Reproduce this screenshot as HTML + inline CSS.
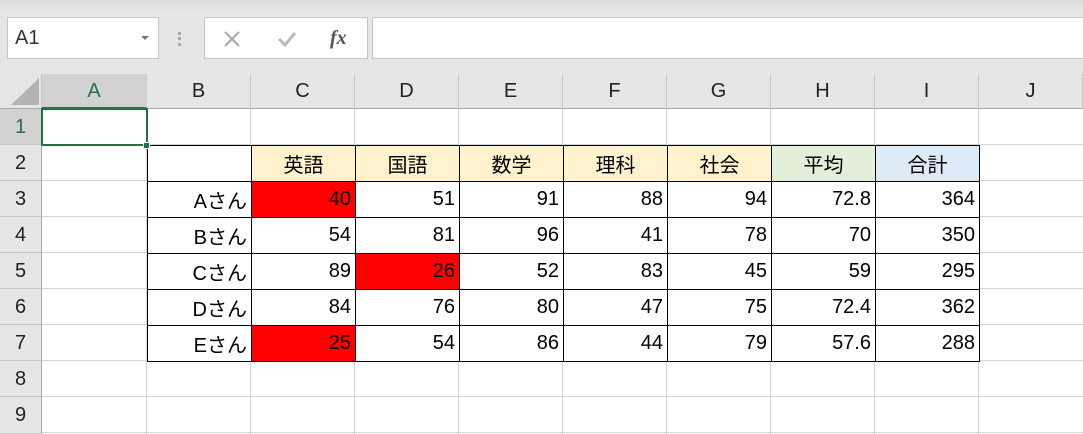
<!DOCTYPE html><html><head><meta charset="utf-8"><style>
*{margin:0;padding:0;box-sizing:border-box}
body{width:1083px;height:434px;overflow:hidden;background:#fff;font-family:"Liberation Sans","Noto Sans CJK JP",sans-serif;position:relative}
.a{position:absolute}
.tb{left:0;top:0;width:1083px;height:74px;background:linear-gradient(#dcdcdc,#e6e6e6 12px,#e6e6e6)}
.box{background:#fff;border:1px solid #c6c6c6}
.ch{top:74px;height:35px;background:#e6e6e6;border-right:1px solid #c8c8c8;border-bottom:1px solid #a8a8a8;font-size:20px;color:#222;text-align:center;line-height:35px}
.rh{left:0;width:42px;background:#e6e6e6;border-bottom:1px solid #c8c8c8;border-right:1px solid #a8a8a8;font-size:20px;color:#222;text-align:center;line-height:36px}
</style></head><body>
<div class="a tb"></div>
<div class="a box" style="left:7px;top:17px;width:152px;height:42px;font-size:20px;line-height:40px;padding-left:7px;color:#333">A1<span class="a" style="right:9px;top:18px;border:4px solid transparent;border-top:4px solid #777"></span></div>
<div class="a" style="left:178px;top:32px;width:3px;height:14px;border-left:3px dotted #aaa"></div>
<div class="a box" style="left:204px;top:17px;width:164px;height:42px"></div>
<svg class="a" style="left:222px;top:29px" width="20" height="20"><path d="M3 3L17 17M17 3L3 17" stroke="#aaa" stroke-width="2"/></svg>
<svg class="a" style="left:276px;top:29px" width="22" height="20"><path d="M3 10L9 16L19 4" stroke="#bbb" stroke-width="3" fill="none"/></svg>
<div class="a" style="left:330px;top:27px;font-family:'Liberation Serif',serif;font-style:italic;font-weight:bold;font-size:20px;color:#555">fx</div>
<div class="a box" style="left:372px;top:17px;width:720px;height:42px"></div>
<div class="a" style="left:0;top:74px;width:42px;height:35px;background:#e6e6e6;border-right:1px solid #c8c8c8;border-bottom:1px solid #a8a8a8"></div>
<svg class="a" style="left:10px;top:78px" width="30" height="28"><path d="M29 0L29 27L1 27Z" fill="#b4b4b4"/></svg>
<div class="a ch" style="left:42px;width:105px;background:#d2d2d2;color:#217346;border-bottom:2px solid #217346">A</div>
<div class="a ch" style="left:147px;width:104px">B</div>
<div class="a ch" style="left:251px;width:104px">C</div>
<div class="a ch" style="left:355px;width:104px">D</div>
<div class="a ch" style="left:459px;width:104px">E</div>
<div class="a ch" style="left:563px;width:104px">F</div>
<div class="a ch" style="left:667px;width:104px">G</div>
<div class="a ch" style="left:771px;width:104px">H</div>
<div class="a ch" style="left:875px;width:104px">I</div>
<div class="a ch" style="left:979px;width:104px">J</div>
<div class="a rh" style="top:109px;height:36px;background:#d2d2d2;color:#217346">1</div>
<div class="a rh" style="top:145px;height:36px">2</div>
<div class="a rh" style="top:181px;height:36px">3</div>
<div class="a rh" style="top:217px;height:36px">4</div>
<div class="a rh" style="top:253px;height:36px">5</div>
<div class="a rh" style="top:289px;height:36px">6</div>
<div class="a rh" style="top:325px;height:36px">7</div>
<div class="a rh" style="top:361px;height:36px">8</div>
<div class="a rh" style="top:397px;height:37px">9</div>
<div class="a" style="left:42px;top:109px;width:1041px;height:325px;background:
repeating-linear-gradient(to bottom,transparent 0 35px,#d4d4d4 35px 36px),
linear-gradient(to right,transparent 104px,#d4d4d4 104px 105px,transparent 105px 208px,#d4d4d4 208px 209px,transparent 209px 312px,#d4d4d4 312px 313px,transparent 313px 416px,#d4d4d4 416px 417px,transparent 417px 520px,#d4d4d4 520px 521px,transparent 521px 624px,#d4d4d4 624px 625px,transparent 625px 728px,#d4d4d4 728px 729px,transparent 729px 832px,#d4d4d4 832px 833px,transparent 833px 936px,#d4d4d4 936px 937px,transparent 937px)"></div>
<table class="a" style="left:147px;top:145px;border-collapse:collapse;font-size:20px;table-layout:fixed">
<colgroup><col style="width:104px"><col style="width:104px"><col style="width:104px"><col style="width:104px"><col style="width:104px"><col style="width:104px"><col style="width:104px"><col style="width:104px"></colgroup>
<tr style="height:36px"><td style="border:1px solid #000;background:#fff"></td><td style="border:1px solid #000;background:#fff2cc;text-align:center">英語</td><td style="border:1px solid #000;background:#fff2cc;text-align:center">国語</td><td style="border:1px solid #000;background:#fff2cc;text-align:center">数学</td><td style="border:1px solid #000;background:#fff2cc;text-align:center">理科</td><td style="border:1px solid #000;background:#fff2cc;text-align:center">社会</td><td style="border:1px solid #000;background:#e2efda;text-align:center">平均</td><td style="border:1px solid #000;background:#ddebf7;text-align:center">合計</td></tr>
</table>
<style>
.t td{border:1px solid #000;text-align:right;padding:0 4px 0 3px;height:36px;background:#fff}
.t td.red{background:#f00}
</style>
<table class="a t" style="left:147px;top:181px;border-collapse:collapse;font-size:20px;table-layout:fixed;width:833px">
<colgroup><col style="width:104px"><col style="width:104px"><col style="width:104px"><col style="width:104px"><col style="width:104px"><col style="width:104px"><col style="width:104px"><col style="width:104px"></colgroup>
<tr><td>Aさん</td><td class="red">40</td><td>51</td><td>91</td><td>88</td><td>94</td><td>72.8</td><td>364</td></tr>
<tr><td>Bさん</td><td>54</td><td>81</td><td>96</td><td>41</td><td>78</td><td>70</td><td>350</td></tr>
<tr><td>Cさん</td><td>89</td><td class="red">26</td><td>52</td><td>83</td><td>45</td><td>59</td><td>295</td></tr>
<tr><td>Dさん</td><td>84</td><td>76</td><td>80</td><td>47</td><td>75</td><td>72.4</td><td>362</td></tr>
<tr><td>Eさん</td><td class="red">25</td><td>54</td><td>86</td><td>44</td><td>79</td><td>57.6</td><td>288</td></tr>
</table>
<div class="a" style="left:41px;top:108px;width:107px;height:38px;border:2px solid #217346"></div>
<div class="a" style="left:143px;top:142px;width:7px;height:7px;background:#217346;border:1px solid #fff"></div>
</body></html>
